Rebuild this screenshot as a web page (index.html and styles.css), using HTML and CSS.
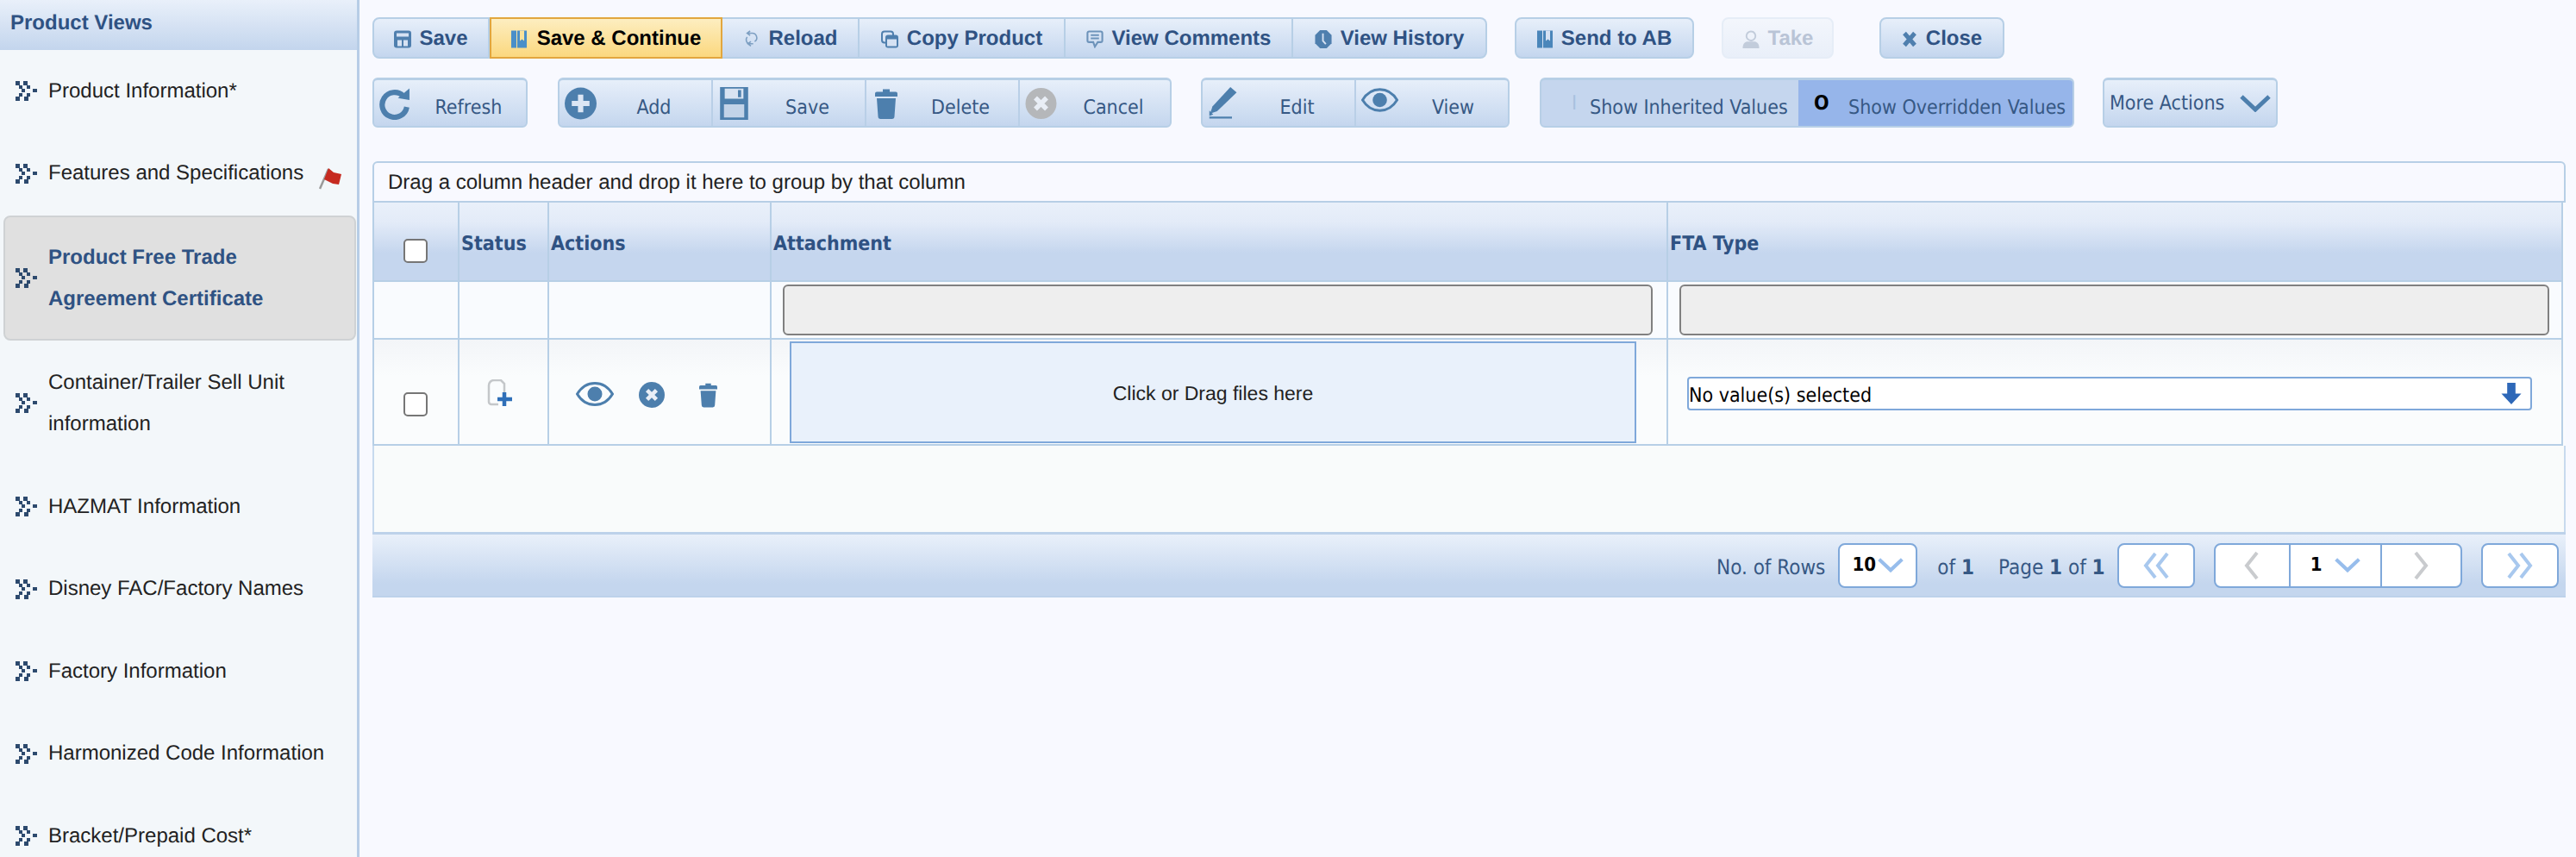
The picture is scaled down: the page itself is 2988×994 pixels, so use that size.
FILE: index.html
```html
<!DOCTYPE html>
<html lang="en">
<head>
<meta charset="utf-8">
<title>Product Views</title>
<link rel="stylesheet" href="styles.css">
</head>
<body>
<svg class="sprite" width="0" height="0">
  <symbol id="chev" viewBox="0 0 25 23">
    <g fill="#2d4a6e">
      <rect x="0" y="0" width="5" height="5"/><rect x="4" y="5" width="4" height="4"/><rect x="7" y="9" width="4" height="4"/><rect x="4" y="14" width="4" height="4"/><rect x="0" y="18" width="5" height="5"/>
      <rect x="9" y="0" width="5" height="5"/><rect x="13" y="5" width="4" height="4"/><rect x="20" y="9" width="5" height="4"/><rect x="13" y="14" width="4" height="4"/><rect x="10" y="18" width="5" height="5"/>
    </g>
  </symbol>
  <symbol id="eye" viewBox="0 0 44 28">
    <path d="M1.500 14C7 5 14 1.500 22 1.500S37 5 42.500 14C37 23 30 26.500 22 26.500S7 23 1.500 14Z" fill="none" stroke="currentColor" stroke-width="3"/>
    <circle cx="22" cy="14" r="8.500" fill="currentColor"/>
  </symbol>
  <symbol id="xcircle" viewBox="0 0 36 36">
    <circle cx="18" cy="18" r="18" fill="currentColor"/>
    <path d="M11.500 11.500l13 13M24.500 11.500l-13 13" stroke="#e9eef6" stroke-width="5.500" fill="none"/>
  </symbol>
  <symbol id="trash" viewBox="0 0 26 36">
    <path d="M9 4.500V1.500h8v3h7a2 2 0 0 1 2 2V10H0V6.500a2 2 0 0 1 2-2Z" fill="currentColor"/>
    <path d="M2 12h22l-1.500 21a3 3 0 0 1-3 3h-13a3 3 0 0 1-3-3Z" fill="currentColor"/>
  </symbol>
  <symbol id="chevdown" viewBox="0 0 36 20">
    <path d="M2 2l16 15L34 2" fill="none" stroke="currentColor" stroke-width="5"/>
  </symbol>
</svg>

<div class="page">
  <aside class="sidebar">
    <h2 class="side-title">Product Views</h2>
    <nav class="side-nav">
      <a class="nav-item"><svg class="nav-icon"><use href="#chev"/></svg><span>Product Information*</span></a>
      <a class="nav-item"><svg class="nav-icon"><use href="#chev"/></svg><span>Features and Specifications</span>
        <svg class="flag" viewBox="0 0 26 26"><path d="M1 25L11 2" stroke="#9a9a9a" stroke-width="2.500" fill="none"/><path d="M11 1l6 5 9 2-3 12-7-1-10-5Z" fill="#c62a20"/></svg>
      </a>
      <a class="nav-item nav-tall nav-active"><svg class="nav-icon"><use href="#chev"/></svg><span>Product Free Trade<br>Agreement Certificate</span></a>
      <a class="nav-item nav-tall"><svg class="nav-icon"><use href="#chev"/></svg><span>Container/Trailer Sell Unit<br>information</span></a>
      <a class="nav-item"><svg class="nav-icon"><use href="#chev"/></svg><span>HAZMAT Information</span></a>
      <a class="nav-item"><svg class="nav-icon"><use href="#chev"/></svg><span>Disney FAC/Factory Names</span></a>
      <a class="nav-item"><svg class="nav-icon"><use href="#chev"/></svg><span>Factory Information</span></a>
      <a class="nav-item"><svg class="nav-icon"><use href="#chev"/></svg><span>Harmonized Code Information</span></a>
      <a class="nav-item"><svg class="nav-icon"><use href="#chev"/></svg><span>Bracket/Prepaid Cost*</span></a>
    </nav>
  </aside>

  <main class="main">
    <div class="toolbar-top">
      <div class="tgroup">
        <button class="tbtn w-save"><svg class="ti" viewBox="0 0 20 20"><path d="M3 0h14a3 3 0 0 1 3 3v14a3 3 0 0 1-3 3H3a3 3 0 0 1-3-3V3a3 3 0 0 1 3-3Z" fill="currentColor"/><path d="M3 3h14v4H3ZM4 11h5v7H4ZM11 11h5v7h-5Z" fill="#d6e2f3"/></svg>Save</button>
        <button class="tbtn tbtn-hot w-cont"><svg class="ti ti-book" viewBox="0 0 18 20"><path d="M0 0h6v20H0ZM7 0h11v20H7Z" fill="#4a8fc9"/><path d="M10 0h5v12l-2.500-2-2.500 2Z" fill="#fbe29a"/></svg>Save &amp; Continue</button>
        <button class="tbtn w-reload"><svg class="ti" viewBox="0 0 20 24"><path d="M9 1L5 4l4 3M5 4h6a6 6 0 0 1 4 11" fill="none" stroke="#7d9fc2" stroke-width="1.800"/><path d="M5 9a6 6 0 0 0 2 9h6M10 15l-4 3 4 3" fill="none" stroke="#7d9fc2" stroke-width="1.800"/></svg>Reload</button>
        <button class="tbtn w-copy"><svg class="ti" viewBox="0 0 20 20"><rect x="1" y="1" width="13" height="13" rx="3" fill="none" stroke="currentColor" stroke-width="2"/><rect x="5" y="5" width="15" height="15" rx="3" fill="currentColor"/><rect x="7" y="10" width="11" height="8" fill="#d6e2f3"/></svg>Copy Product</button>
        <button class="tbtn w-comm"><svg class="ti" viewBox="0 0 20 22"><path d="M3 1.500h14a2 2 0 0 1 2 2v9a2 2 0 0 1-2 2h-3.500L10 20l-2-5.500H3a2 2 0 0 1-2-2v-9a2 2 0 0 1 2-2Z" fill="none" stroke="#6d93ba" stroke-width="2.200"/><path d="M5 6h10M5 10h10" stroke="#6d93ba" stroke-width="2"/></svg>View Comments</button>
        <button class="tbtn w-hist"><svg class="ti" viewBox="0 0 20 22"><path d="M6 0h8l6 6v10l-6 6H6l-6-6V6Z" fill="currentColor"/><path d="M9.500 4v9l3.500 4" fill="none" stroke="#d6e2f3" stroke-width="2"/></svg>View History</button>
      </div>
      <button class="tbtn tbtn-solo w-send"><svg class="ti ti-book" viewBox="0 0 18 20"><path d="M0 0h6v20H0ZM7 0h11v20H7Z" fill="#4a86ba"/><path d="M10 0h5v12l-2.500-2-2.500 2Z" fill="#d6e2f3"/></svg>Send to AB</button>
      <button class="tbtn tbtn-solo tbtn-off w-take"><svg class="ti" viewBox="0 0 20 22"><circle cx="10" cy="7" r="5.500" fill="none" stroke="currentColor" stroke-width="2"/><path d="M0 22c0-6 3-8 6-8h8c3 0 6 2 6 8Z" fill="currentColor"/></svg>Take</button>
      <button class="tbtn tbtn-solo w-close"><svg class="ti ti-x" viewBox="0 0 18 20"><path d="M3 3l12 14M15 3L3 17" stroke="#4f7fae" stroke-width="5" fill="none"/></svg>Close</button>
    </div>

    <div class="toolbar-second">
      <div class="sgroup">
        <button class="sbtn w-refresh"><svg class="si" viewBox="0 0 36 36"><path d="M27 9.500A14 14 0 1 0 31 22" fill="none" stroke="currentColor" stroke-width="6"/><path d="M21 12L34 14V1Z" fill="currentColor"/></svg><span class="slabel">Refresh</span></button>
      </div>
      <div class="sgroup">
        <button class="sbtn w-add"><svg class="si" viewBox="0 0 36 36"><circle cx="18" cy="18" r="18" fill="currentColor"/><path d="M18 8v20M8 18h20" stroke="#dce6f4" stroke-width="6"/></svg><span class="slabel">Add</span></button>
        <button class="sbtn w-add"><svg class="si" viewBox="0 0 36 42"><path d="M0 0h36v42H0Z" fill="currentColor"/><path d="M6 2h24v13H6Z" fill="#d8e3f2"/><path d="M23 4h4v9h-4Z" fill="currentColor"/><path d="M5 22h26v17H5Z" fill="#c2d3e8"/></svg><span class="slabel">Save</span></button>
        <button class="sbtn w-add"><svg class="si si-trash"><use href="#trash"/></svg><span class="slabel">Delete</span></button>
        <button class="sbtn w-cancel"><svg class="si si-grey"><use href="#xcircle"/></svg><span class="slabel">Cancel</span></button>
      </div>
      <div class="sgroup sgroup-edit">
        <button class="sbtn w-edit"><svg class="si" viewBox="0 0 37 42"><path d="M27 0l8 7L10 31 1 34l3-9Z" fill="currentColor"/><path d="M0 39h29" stroke="currentColor" stroke-width="2.500"/><path d="M0 30l5 5-5 2Z" fill="currentColor"/></svg><span class="slabel">Edit</span></button>
        <button class="sbtn w-view"><svg class="si si-eye"><use href="#eye"/></svg><span class="slabel">View</span></button>
      </div>
      <div class="sgroup toggle">
        <button class="tog tog-inherit"><span class="tog-mark tog-i">I</span><span class="tog-text">Show Inherited Values</span></button>
        <button class="tog tog-over"><span class="tog-mark">O</span><span class="tog-text">Show Overridden Values</span></button>
      </div>
      <button class="sgroup more"><span>More Actions</span><svg class="more-chev"><use href="#chevdown"/></svg></button>
    </div>

    <div class="group-bar">Drag a column header and drop it here to group by that column</div>

    <div class="grid">
      <div class="cell head head-check"><span class="check"></span></div>
      <div class="cell head">Status</div>
      <div class="cell head">Actions</div>
      <div class="cell head">Attachment</div>
      <div class="cell head">FTA Type</div>

      <div class="cell filter"></div>
      <div class="cell filter"></div>
      <div class="cell filter"></div>
      <div class="cell filter filter-att"><span class="filter-input"></span></div>
      <div class="cell filter filter-fta"><span class="filter-input"></span></div>

      <div class="cell row row-check"><span class="check"></span></div>
      <div class="cell row row-status">
        <svg class="doc" viewBox="0 0 30 32"><path d="M9 1h8l4 4v10M14 29H6a3 3 0 0 1-3-3V7a6 6 0 0 1 6-6" fill="none" stroke="#c4c7ca" stroke-width="2.500"/><path d="M21 15v16M13 23h17" stroke="#2f6fb8" stroke-width="4.500"/></svg>
      </div>
      <div class="cell row row-actions">
        <svg class="ra-eye"><use href="#eye"/></svg>
        <svg class="ra-x"><use href="#xcircle"/></svg>
        <svg class="ra-trash"><use href="#trash"/></svg>
      </div>
      <div class="cell row row-att"><div class="drop">Click or Drag files here</div></div>
      <div class="cell row row-fta">
        <div class="multi"><span class="multi-text">No value(s) selected</span><svg class="multi-arrow" viewBox="0 0 24 26"><path d="M7 0h10v13h7L12 26 0 13h7Z" fill="#2e68b8"/></svg></div>
      </div>
    </div>
    <div class="empty"></div>

    <div class="pager">
      <span class="p-text">No. of Rows</span>
      <span class="p-box p-rows"><b>10</b><svg class="p-down"><use href="#chevdown"/></svg></span>
      <span class="p-text p-of">of <b>1</b></span>
      <span class="p-text p-page">Page <b>1</b> of <b>1</b></span>
      <span class="p-box p-first"><svg class="p-arrows" viewBox="0 0 34 32"><path d="M16 2L5 16l11 14M30 2L19 16l11 14" fill="none" stroke="#a8c8ee" stroke-width="4"/></svg></span>
      <span class="p-box p-mid">
        <span class="p-seg p-prev"><svg class="p-arrow" viewBox="0 0 18 34"><path d="M15 2L3 17l12 15" fill="none" stroke="#c9cbce" stroke-width="4"/></svg></span>
        <span class="p-seg p-cur"><b>1</b><svg class="p-down"><use href="#chevdown"/></svg></span>
        <span class="p-seg p-next"><svg class="p-arrow" viewBox="0 0 18 34"><path d="M3 2l12 15L3 32" fill="none" stroke="#c9cbce" stroke-width="4"/></svg></span>
      </span>
      <span class="p-box p-last"><svg class="p-arrows" viewBox="0 0 34 32"><path d="M4 2l11 14L4 30M18 2l11 14-11 14" fill="none" stroke="#a8c8ee" stroke-width="4"/></svg></span>
    </div>
  </main>
</div>
</body>
</html>
```

FILE: styles.css
```css
* { box-sizing: border-box; }
html, body { margin: 0; padding: 0; height: 100%; }
body {
  background: #f8f9ff;
  font-family: "Liberation Sans", Arial, sans-serif;
  font-size: 24px;
  color: #222;
  overflow: hidden;
  text-rendering: geometricPrecision;
}
button { font: inherit; margin: 0; cursor: pointer; text-rendering: geometricPrecision; }
.sprite { position: absolute; }

.page { display: flex; height: 994px; overflow: hidden; }

/* Sidebar */
.sidebar {
  flex: 0 0 417px;
  height: 100%;
  background: #f3f7fa;
  border-right: 3px solid #b7cde6;
  overflow: hidden;
}
.side-title {
  margin: 0;
  height: 58px;
  padding: 12px 0 0 12px;
  font-size: 24px;
  line-height: 30px;
  font-weight: bold;
  color: #2f5283;
  background: linear-gradient(#e9f0fa, #c3d5ed);
}
.nav-item {
  display: flex;
  align-items: center;
  height: 95.500px;
  padding-left: 18px;
  line-height: 48px;
  color: #222;
}
.nav-tall { height: 145px; }
.nav-icon { flex: 0 0 25px; width: 25px; height: 23px; margin-right: 13px; }
.flag { width: 26px; height: 26px; margin: 12px 0 0 18px; }
.nav-active {
  margin: 1px 1px 0 4px;
  padding-left: 12px;
  background: #e0e0e0;
  border: 2px solid #cfd2d4;
  border-radius: 8px;
  font-weight: bold;
  color: #2f5283;
}

/* Main column */
.main { flex: 1; min-width: 0; padding: 20px 12px 0 15px; }

.toolbar-top { display: flex; height: 48px; }
.tgroup { display: flex; }
.tbtn {
  display: flex;
  align-items: center;
  justify-content: center;
  gap: 10px;
  height: 48px;
  padding: 2px 0 0;
  font-weight: bold;
  color: #2f5283;
  background: linear-gradient(#e7effa, #c4d6ee);
  border: 2px solid #b7cfe6;
  border-left-width: 0;
}
.tgroup .tbtn:first-child { border-left-width: 2px; border-radius: 8px 0 0 8px; }
.tgroup .tbtn:last-child { border-radius: 0 8px 8px 0; }
.tbtn-hot {
  color: #000;
  background: linear-gradient(#fdeec0, #fbd87e);
  border: 2px solid #e2a63e;
}
.tbtn-solo { border-left-width: 2px; border-radius: 8px; }
.tbtn-off { color: #b9c4d6; background: linear-gradient(#f3f6fc, #e9eff9); border-color: #e6edf7; }
.tbtn-off .ti { color: #c2ccdb; }
.ti { width: 20px; height: 21px; color: #4f7fae; flex: none; }
.ti-book { width: 18px; }
.ti-x { width: 18px; }
.w-save { width: 136px; gap: 9px; }
.w-cont { width: 270px; gap: 12px; }
.w-reload { width: 159px; }
.w-copy { width: 239px; }
.w-comm { width: 264px; }
.w-hist { width: 225px; }
.w-send { width: 208px; margin-left: 32px; }
.w-take { width: 130px; margin-left: 32px; }
.w-close { width: 145px; margin-left: 53px; }

.toolbar-second { display: flex; align-items: flex-start; gap: 35px; height: 58px; margin-top: 22px; }
.sgroup {
  display: flex;
  height: 58px;
  border: 2px solid #b7cfe6;
  border-top-width: 3px;
  border-radius: 6px;
  background: linear-gradient(#e7effa, #c4d6ee);
  overflow: hidden;
}
.sgroup-edit { margin-left: -1px; }
.sbtn {
  display: flex;
  align-items: center;
  height: 100%;
  padding: 0 0 0 6px;
  background: none;
  border: 0;
  border-right: 2px solid #b9cfe7;
  color: #365884;
  font-family: "DejaVu Sans Condensed", "Liberation Sans", sans-serif;
  font-size: 23px;
}
.sbtn:last-child { border-right: 0; }
.slabel { flex: 1; text-align: center; padding-top: 10px; }
.si { flex: none; width: 37px; height: 38px; color: #4d7fad; }
.si-trash { width: 26px; height: 36px; margin: 0 6px 0 4px; }
.si-grey { color: #b5b7ba; height: 36px; }
.si-eye { width: 43px; height: 28px; margin-top: -8px; }
.w-refresh { width: 176px; }
.w-add { width: 178px; }
.w-cancel { width: 174px; }
.w-edit { width: 178px; }
.w-view { width: 176px; }

.toggle { background: #c5d6ee; }
.tog {
  display: flex;
  align-items: center;
  height: 100%;
  border: 0;
  padding: 0;
  background: none;
  color: #365884;
  font-family: "DejaVu Sans Condensed", "Liberation Sans", sans-serif;
  font-size: 23px;
}
.tog-inherit { width: 298px; }
.tog-over { width: 318px; background: #96b5ea; }
.tog-mark { font-weight: bold; color: #000; }
.tog-i { color: #a9c1df; font-weight: normal; margin-left: 20px; width: 36px; }
.tog-over .tog-mark { margin-left: 18px; width: 40px; text-align: left; }
.tog-text { padding-top: 10px; white-space: nowrap; }
.more {
  width: 203px;
  align-items: center;
  padding: 0 0 0 6px;
  color: #365884;
  font-family: "DejaVu Sans Condensed", "Liberation Sans", sans-serif;
  font-size: 23px;
  margin-left: -2px;
}
.more-chev { width: 36px; height: 20px; margin-left: 18px; color: #4d7fad; }

/* Grouping bar */
.group-bar {
  height: 48px;
  margin-top: 39px;
  padding: 0 0 0 16px;
  line-height: 45px;
  color: #222;
  border: 2px solid #b7cfe6;
  border-radius: 6px 6px 0 0;
  background: #f8f9ff;
}

/* Grid */
.grid {
  display: grid;
  grid-template-columns: 101px 104px 258px 1040px 1038px;
  grid-template-rows: 92px 67px 123px;
  background: #f9fbfe;
}
.cell { border-right: 2px solid #b7cfe6; border-bottom: 2px solid #b7cfe6; }
.cell:nth-child(5n+1) { border-left: 2px solid #b7cfe6; }
.head {
  padding: 35px 0 0 2px;
  font-family: "DejaVu Sans Condensed", "Liberation Sans", sans-serif;
  font-weight: bold;
  font-size: 23px;
  line-height: 27px;
  color: #2f5283;
  background: linear-gradient(#e9f0fa 0, #e3ebf8 25%, #c5d6ee 65%, #c5d6ee 100%);
}
.head-check { padding: 42px 0 0 34px; }
.check {
  display: block;
  width: 28px;
  height: 28px;
  background: #fff;
  border: 2px solid #767676;
  border-radius: 5px;
}
.filter { background: #f9fbfe; }
.filter-att { padding: 3px 0 0 13px; }
.filter-fta { padding: 3px 0 0 13px; }
.filter-input {
  display: block;
  width: 1009px;
  height: 59px;
  background: #eeeeee;
  border: 2px solid #808080;
  border-radius: 6px;
}
.row { background: linear-gradient(#f3f5f8, #fafcfd 35%); }
.row-check { padding: 61px 0 0 34px; }
.row-status { padding: 46px 0 0 31px; }
.doc { display: block; width: 30px; height: 32px; }
.row-actions { display: flex; align-items: flex-start; padding: 49px 0 0 31px; color: #4d7fad; }
.ra-eye { width: 44px; height: 28px; }
.ra-x { width: 30px; height: 30px; margin-left: 29px; }
.ra-trash { width: 21px; height: 30px; margin-left: 40px; }
.row-att { padding: 2px 0 0 21px; }
.drop {
  display: flex;
  align-items: center;
  justify-content: center;
  width: 982px;
  height: 118px;
  padding-top: 2px;
  background: #e9f1fb;
  border: 2px solid #7fa8da;
  color: #222;
  font-size: 23px;
}
.row-fta { padding: 43px 0 0 22px; }
.multi {
  display: flex;
  align-items: center;
  justify-content: space-between;
  width: 980px;
  height: 39px;
  padding: 0 10px 0 0;
  background: #fff;
  border: 2px solid #7fa8da;
  border-radius: 4px;
  color: #000;
  font-family: "DejaVu Sans Condensed", "Liberation Sans", sans-serif;
  font-size: 23px;
}
.multi-text { padding-top: 4px; }
.multi-arrow { width: 24px; height: 25px; }

.empty {
  height: 100px;
  background: #f9fbfb;
  border-left: 2px solid #c7daee;
  border-right: 2px solid #c7daee;
}

/* Pager */
.pager {
  display: flex;
  align-items: center;
  height: 76px;
  padding: 0 0 0 1559px;
  border-top: 3px solid #bdd2ea;
  border-bottom: 2px solid #bdd2ea;
  background: linear-gradient(#e9f0fa, #c4d6ee 80%);
  color: #365884;
  font-family: "DejaVu Sans Condensed", "Liberation Sans", sans-serif;
  font-size: 24px;
}
.pager b { font-weight: bold; }
.p-text { white-space: nowrap; padding-top: 4px; }
.p-of { margin-left: 23px; }
.p-page { margin-left: 28px; }
.p-box {
  display: flex;
  align-items: center;
  justify-content: center;
  height: 52px;
  background: #fff;
  border: 2px solid #7fa8da;
  border-radius: 8px;
  color: #000;
  font-size: 22px;
}
.p-rows { width: 92px; margin-left: 15px; gap: 2px; }
.p-rows b, .p-cur b { font-weight: bold; }
.p-down { width: 30px; height: 17px; color: #97bdec; }
.p-first { width: 90px; margin-left: 14px; }
.p-mid { width: 288px; margin-left: 22px; justify-content: flex-start; }
.p-last { width: 90px; margin-left: 22px; }
.p-arrows { width: 34px; height: 32px; }
.p-seg { display: flex; align-items: center; justify-content: center; height: 100%; }
.p-prev { width: 85px; }
.p-cur { width: 108px; border-left: 2px solid #7fa8da; border-right: 2px solid #7fa8da; gap: 14px; }
.p-next { flex: 1; }
.p-arrow { width: 18px; height: 34px; }
```
